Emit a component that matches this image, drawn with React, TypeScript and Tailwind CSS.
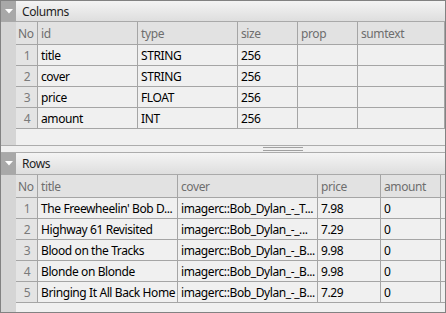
import React from 'react';

type Col = { key: string; label: string; w: string };

const columnCols: Col[] = [
  { key: 'id', label: 'id', w: 'w-[100px]' },
  { key: 'type', label: 'type', w: 'w-[100px]' },
  { key: 'size', label: 'size', w: 'w-[60px]' },
  { key: 'prop', label: 'prop', w: 'w-[60px]' },
  { key: 'sumtext', label: 'sumtext', w: 'flex-1' },
];

const columnRows: Record<string, string>[] = [
  { id: 'title', type: 'STRING', size: '256', prop: '', sumtext: '' },
  { id: 'cover', type: 'STRING', size: '256', prop: '', sumtext: '' },
  { id: 'price', type: 'FLOAT', size: '256', prop: '', sumtext: '' },
  { id: 'amount', type: 'INT', size: '256', prop: '', sumtext: '' },
];

const rowCols: Col[] = [
  { key: 'title', label: 'title', w: 'w-[140px]' },
  { key: 'cover', label: 'cover', w: 'w-[140px]' },
  { key: 'price', label: 'price', w: 'w-[63px]' },
  { key: 'amount', label: 'amount', w: 'w-[60px]' },
];

const rowRows: Record<string, string>[] = [
  { title: "The Freewheelin' Bob D...", cover: 'imagerc::Bob_Dylan_-_T...', price: '7.98', amount: '0' },
  { title: 'Highway 61 Revisited', cover: 'imagerc::Bob_Dylan_-_...', price: '7.29', amount: '0' },
  { title: 'Blood on the Tracks', cover: 'imagerc::Bob_Dylan_-_B...', price: '9.98', amount: '0' },
  { title: 'Blonde on Blonde', cover: 'imagerc::Bob_Dylan_-_B...', price: '9.98', amount: '0' },
  { title: 'Bringing It All Back Home', cover: 'imagerc::Bob_Dylan_-_B...', price: '7.29', amount: '0' },
];

function SectionBar({ title, h }: { title: string; h: string }) {
  return (
    <div className={`flex ${h} shrink-0 border-b border-[#a9a9a9]`}>
      <div className="w-[15px] bg-[#a8a8a8] flex items-center justify-center">
        <svg width="8" height="5" viewBox="0 0 8 5">
          <polygon points="0,0 8,0 4,4.5" fill="#ffffff" />
        </svg>
      </div>
      <div className="flex-1 flex items-center pl-[6px] pt-[1px] bg-gradient-to-b from-[#f4f4f4] to-[#dedede] text-[#1e1e1e]">
        {title}
      </div>
    </div>
  );
}

function Grid({ cols, rows }: { cols: Col[]; rows: Record<string, string>[] }) {
  return (
    <div className="flex-1 flex min-h-0">
      <div className="w-[15px] shrink-0 bg-[#d5d5d5]" />
      <div className="flex-1 flex flex-col bg-[#f0f0f0]">
        <div className="flex h-[23px] bg-[#e2e2e2] border-b border-[#a5a5a5] text-[#6e6e6e]">
          <div className="w-[22px] shrink-0 border-r border-[#a5a5a5] pl-[2px] pt-[1px] flex items-center">No</div>
          {cols.map(c => (
            <div key={c.key} className={`${c.w} shrink-0 border-r border-[#a5a5a5] pl-[3px] pt-[1px] flex items-center`}>
              {c.label}
            </div>
          ))}
        </div>
        {rows.map((r, i) => (
          <div key={i} className="flex h-[21px] border-b border-[#a5a5a5]">
            <div className="w-[22px] shrink-0 border-r border-[#a5a5a5] bg-[#e4e4e4] text-[#7a7a7a] flex items-center justify-center pl-[1px] pt-[1px]">
              {i + 1}
            </div>
            {cols.map(c => (
              <div
                key={c.key}
                className={`${c.w} shrink-0 border-r border-[#a5a5a5] pl-[3px] pt-[1px] flex items-center whitespace-nowrap overflow-hidden text-black`}
              >
                {r[c.key]}
              </div>
            ))}
          </div>
        ))}
      </div>
    </div>
  );
}

export default function App() {
  return (
    <div
      className="w-[446px] h-[313px] border border-[#828282] flex flex-col bg-[#f0f0f0] text-[12px] leading-none tracking-[-0.4px]"
      style={{ fontFamily: '"Noto Sans", "Open Sans", sans-serif' }}
    >
      <SectionBar title="Columns" h="h-[21px]" />
      <Grid cols={columnCols} rows={columnRows} />
      <div className="h-[8px] shrink-0 border-t border-b border-[#acacac] flex items-center justify-center">
        <div className="w-[40px] h-[4px] border-t border-b border-[#a0a0a0] ml-[120px]" />
      </div>
      <SectionBar title="Rows" h="h-[22px]" />
      <div className="h-[137px] shrink-0 flex flex-col">
        <Grid cols={rowCols} rows={rowRows} />
      </div>
    </div>
  );
}
